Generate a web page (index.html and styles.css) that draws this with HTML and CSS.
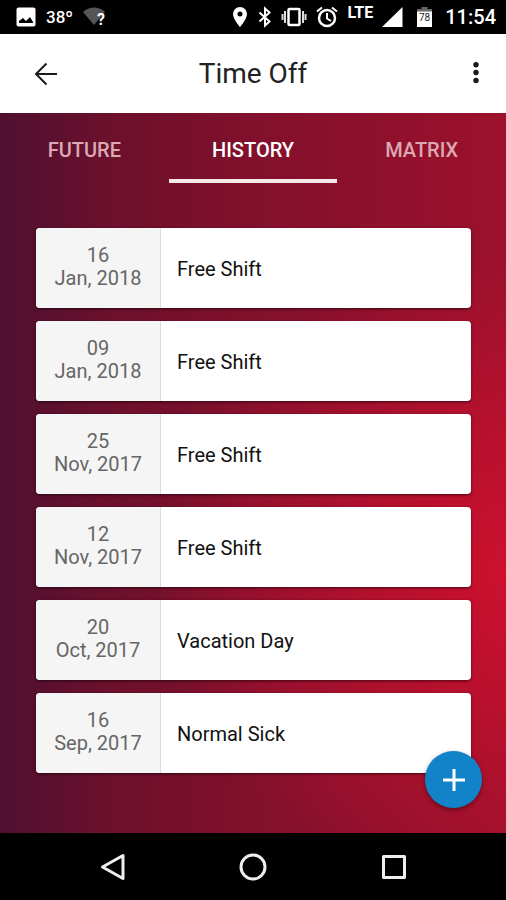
FILE: index.html
```html
<!DOCTYPE html>
<html lang="en">
<head>
  <meta charset="UTF-8" />
  <meta name="viewport" content="width=device-width, initial-scale=1.0"/>
  <title>Time Off</title>
  <link rel="stylesheet" href="styles.css">
</head>
<body>
  <div class="status">
    <div class="status-left">
      <svg width="20" height="20" viewBox="0 0 20 20"><rect x="0.5" y="0.5" width="19" height="19" rx="2" fill="#fff"/><path d="M3 16v-2l4-3 3 3 4-4 3 5v1z" fill="#000"/></svg>
      <span class="temp">38º</span>
      <svg width="26" height="24" viewBox="0 0 26 24"><path d="M0 7C6 1 16 1 22 7L11 20z" fill="#555"/><text class="wifi-mark" x="14" y="20">?</text></svg>
    </div>
    <div class="status-right">
      <svg width="18" height="22" viewBox="0 0 18 22"><path fill="#fff" fill-rule="evenodd" d="M9 1a7 7 0 0 0-7 7c0 5 7 13 7 13s7-8 7-13a7 7 0 0 0-7-7zm0 4.500a2.500 2.500 0 1 1 0 5 2.500 2.500 0 0 1 0-5z"/></svg>
      <svg width="16" height="22" viewBox="0 0 16 22"><path d="M2.500 6.500L12.500 15.500 8 19.500V2.500L12.500 6.500 2.500 15.500" fill="none" stroke="#fff" stroke-width="2"/></svg>
      <svg width="26" height="22" viewBox="0 0 26 22"><rect x="7.500" y="3" width="11" height="16" rx="1" fill="none" stroke="#fff" stroke-width="2.500"/><path d="M4 5v12M22 5v12M1.500 8v6M24.500 8v6" stroke="#ddd" stroke-width="2"/></svg>
      <svg width="24" height="22" viewBox="0 0 24 22"><circle cx="12" cy="12" r="8" fill="none" stroke="#fff" stroke-width="2.500"/><path d="M12 7v5.500l4 2.500M2 5.500l5-4M22 5.500l-5-4" fill="none" stroke="#fff" stroke-width="2"/></svg>
      <span class="lte">LTE</span>
      <svg width="24" height="22" viewBox="0 0 24 22"><path d="M1 21L21.500 1v20z" fill="#fff"/></svg>
      <svg width="24" height="22" viewBox="0 0 24 22"><path d="M8.500 1h6v2h4.500v3H4V3h4.500z" fill="#666"/><path d="M4 5.500h15V21H4z" fill="#fff"/><text class="charge" x="11.500" y="15">78</text></svg>
      <span class="clock">11:54</span>
    </div>
  </div>

  <header class="header">
    <button class="icon-btn" aria-label="Back">
      <svg width="24" height="24" viewBox="0 0 24 24"><path d="M23 12H2M12.500 1.500L2 12l10.500 10.500" fill="none" stroke="#1a1a1a" stroke-width="2"/></svg>
    </button>
    <h1>Time Off</h1>
    <button class="icon-btn" aria-label="More options">
      <svg width="24" height="24" viewBox="0 0 24 24"><g fill="#1a1a1a"><circle cx="12" cy="2.700" r="2.700"/><circle cx="12" cy="10.500" r="2.700"/><circle cx="12" cy="18.500" r="2.700"/></g></svg>
    </button>
  </header>

  <main class="content">
    <nav class="tabs">
      <button>FUTURE</button>
      <button class="active">HISTORY</button>
      <button>MATRIX</button>
    </nav>

    <ul class="list">
      <li class="card">
        <div class="date"><span>16</span><span>Jan, 2018</span></div>
        <div class="type">Free Shift</div>
      </li>
      <li class="card">
        <div class="date"><span>09</span><span>Jan, 2018</span></div>
        <div class="type">Free Shift</div>
      </li>
      <li class="card">
        <div class="date"><span>25</span><span>Nov, 2017</span></div>
        <div class="type">Free Shift</div>
      </li>
      <li class="card">
        <div class="date"><span>12</span><span>Nov, 2017</span></div>
        <div class="type">Free Shift</div>
      </li>
      <li class="card">
        <div class="date"><span>20</span><span>Oct, 2017</span></div>
        <div class="type">Vacation Day</div>
      </li>
      <li class="card">
        <div class="date"><span>16</span><span>Sep, 2017</span></div>
        <div class="type">Normal Sick</div>
      </li>
    </ul>

    <button class="fab" aria-label="Add time off">
      <svg width="24" height="24" viewBox="0 0 24 24"><path d="M12 1v22M1 12h22" stroke="#fff" stroke-width="3"/></svg>
    </button>
  </main>

  <footer class="navbar">
    <button aria-label="Back">
      <svg width="28" height="28" viewBox="0 0 28 28"><path d="M25 2.500v23L4.500 14z" fill="none" stroke="#eee" stroke-width="3" stroke-linejoin="round"/></svg>
    </button>
    <button aria-label="Home">
      <svg width="28" height="28" viewBox="0 0 28 28"><circle cx="14" cy="14" r="12" fill="none" stroke="#eee" stroke-width="3"/></svg>
    </button>
    <button aria-label="Recent apps">
      <svg width="28" height="28" viewBox="0 0 28 28"><rect x="3.500" y="3.500" width="21" height="21" fill="none" stroke="#eee" stroke-width="3" stroke-linejoin="round"/></svg>
    </button>
  </footer>
</body>
</html>
```

FILE: styles.css
```css
* {
  box-sizing: border-box;
}
body {
  font-family: Roboto, sans-serif;
  background: #000;
  margin: 0;
  min-height: 100vh;
  display: flex;
  flex-direction: column;
}
button {
  font-family: inherit;
  background: none;
  border: none;
  padding: 0;
  cursor: pointer;
}
svg {
  display: block;
}

/* status bar */
.status {
  display: flex;
  justify-content: space-between;
  height: 34px;
  padding: 0 10px 0 16px;
  background: #000;
  color: #fff;
}
.status-left,
.status-right {
  display: flex;
  align-items: center;
}
.status-left {
  gap: 10px;
}
.status-right {
  gap: 8px;
}
.temp {
  font-size: 17px;
  font-weight: 500;
}
.wifi-mark {
  font-size: 16px;
  font-weight: 700;
  fill: #fff;
}
.lte {
  font-size: 16px;
  font-weight: 700;
  line-height: 16px;
  padding-bottom: 8px;
}
.charge {
  font-size: 10px;
  fill: #222;
  text-anchor: middle;
}
.clock {
  font-size: 20px;
  font-weight: 500;
}

/* header */
.header {
  display: flex;
  align-items: center;
  justify-content: space-between;
  height: 79px;
  padding: 0 18px;
  background: #fff;
}
.header h1 {
  margin: 0;
  font-size: 28px;
  font-weight: 400;
  color: #222;
}
.icon-btn {
  width: 56px;
  height: 56px;
  display: flex;
  align-items: center;
  justify-content: center;
}
.icon-btn:last-child {
  width: 24px;
  margin: 0 0 0 32px;
}

/* content */
.content {
  position: relative;
  flex: 1;
  background:
    radial-gradient(ellipse 75% 45% at 106% 64%, #d0102e 0%, #cb102ecc 25%, #cb102e00 100%),
    linear-gradient(90deg, #4e1030 0%, #6c102c 22%, #82102c 50%, #9c112c 100%);
}
.tabs {
  display: flex;
}
.tabs button {
  flex: 1;
  height: 70px;
  padding-top: 8px;
  font-size: 20px;
  font-weight: 500;
  color: #dba8b3;
  border-bottom: 4px solid transparent;
}
.tabs .active {
  color: #fff;
  border-bottom-color: #f5e9e9;
}
.list {
  list-style: none;
  margin: 0;
  padding: 45px 35px 60px 36px;
  display: flex;
  flex-direction: column;
  gap: 13px;
}
.card {
  display: flex;
  height: 80px;
  background: #fff;
  border-radius: 4px;
  box-shadow: 0 1px 3px rgba(0, 0, 0, 0.6);
  overflow: hidden;
}
.date {
  width: 125px;
  padding-top: 16px;
  display: flex;
  flex-direction: column;
  align-items: center;
  font-size: 20px;
  line-height: 23px;
  color: #666;
  background: #f5f5f5;
  border-right: 1px solid #ddd;
}
.type {
  flex: 1;
  padding: 2px 16px 0;
  display: flex;
  align-items: center;
  font-size: 20px;
  color: #111;
}
.fab {
  position: absolute;
  right: 24px;
  bottom: 25px;
  width: 57px;
  height: 57px;
  border-radius: 50%;
  background: #1283c9;
  display: flex;
  align-items: center;
  justify-content: center;
  box-shadow: 0 2px 5px rgba(0, 0, 0, 0.4);
}

/* bottom bar */
.navbar {
  display: flex;
  height: 67px;
  padding: 0 42px;
  background: #000;
}
.navbar button {
  flex: 1;
  display: flex;
  align-items: center;
  justify-content: center;
}
```
